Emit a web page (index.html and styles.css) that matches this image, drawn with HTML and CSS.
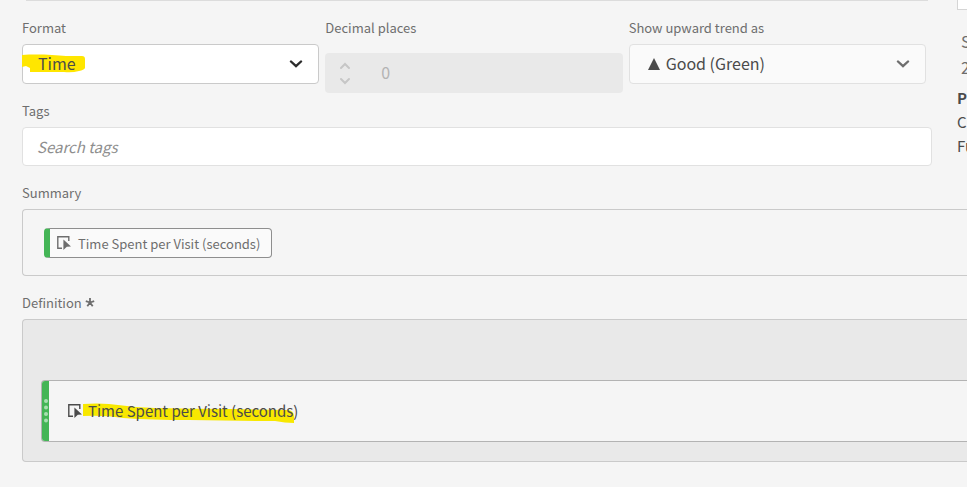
FILE: index.html
```html
<!DOCTYPE html>
<html lang="en">
  <head>
    <meta charset="UTF-8" />
    <meta name="viewport" content="width=device-width, initial-scale=1" />
    <title>Metric Builder</title>
    <link rel="stylesheet" href="styles.css" />
  </head>
  <body>
    <main class="builder">
      <div class="top">
        <form class="settings">
          <div class="previous-field"></div>
          <div class="field-row">
            <div class="field">
              <label for="format">Format</label>
              <div class="picker picker-active">
                <svg class="marker" width="64" height="19" viewBox="0 0 64 19">
                  <path d="M0 1 C16 0 32 1 44 2 L60 2 Q63 2 63 5 L63 14 Q62 16 57 17 Q50 19 42 18 L8 18 L8 14 L4 12 L0 13 Z" fill="#ffe600" />
                </svg>
                <select id="format">
                  <option>Time</option>
                </select>
                <svg class="chevron" width="14" height="8" viewBox="0 0 14 8">
                  <path d="M2 1.5 L7 6.2 L12 1.5" />
                </svg>
              </div>
            </div>
            <div class="field">
              <label for="decimals">Decimal places</label>
              <div class="stepper">
                <div class="stepper-buttons">
                  <button type="button" aria-label="Increase" disabled>
                    <svg width="12" height="8" viewBox="0 0 12 8"><path d="M2 6 L6 2 L10 6" /></svg>
                  </button>
                  <button type="button" aria-label="Decrease" disabled>
                    <svg width="12" height="8" viewBox="0 0 12 8"><path d="M2 2 L6 6 L10 2" /></svg>
                  </button>
                </div>
                <input id="decimals" type="number" value="0" disabled />
              </div>
            </div>
            <div class="field">
              <label for="trend">Show upward trend as</label>
              <div class="picker picker-trend">
                <svg class="triangle" width="12" height="12" viewBox="0 0 12 12">
                  <path d="M6 0 L12 12 L0 12 Z" />
                </svg>
                <select id="trend">
                  <option>Good (Green)</option>
                </select>
                <svg class="chevron" width="14" height="8" viewBox="0 0 14 8">
                  <path d="M2 1.5 L7 6.2 L12 1.5" />
                </svg>
              </div>
            </div>
          </div>
          <div class="field">
            <label for="tags">Tags</label>
            <input id="tags" class="search" type="text" placeholder="Search tags" />
          </div>
        </form>

        <aside class="side">
          <div class="side-box"></div>
          <p class="side-note">S</p>
          <p class="side-note">2</p>
          <h2>P</h2>
          <p>Cu</p>
          <p>Fu</p>
        </aside>
      </div>

      <section class="section">
        <h3>Summary</h3>
        <div class="summary">
          <div class="chip">
            <svg class="metric-icon" width="14" height="14" viewBox="0 0 14 14">
              <path d="M5 12.2 H0.8 V0.8 H11.8 V5" fill="none" stroke="currentColor" stroke-width="1.4" />
              <path d="M6.4 3.4 L14 10.6 L9.8 10.7 L6.4 14 Z" fill="currentColor" />
            </svg>
            <span>Time Spent per Visit (seconds)</span>
          </div>
        </div>
      </section>

      <section class="section">
        <h3>
          Definition
          <svg class="required" width="10" height="11" viewBox="0 0 10 11">
            <path d="M5 5.5 V1 M5 5.5 L9.2 4.1 M5 5.5 L7.7 9.3 M5 5.5 L2.3 9.3 M5 5.5 L0.8 4.1" />
          </svg>
        </h3>
        <div class="definition">
          <div class="metric">
            <div class="handle">
              <svg width="4" height="24" viewBox="0 0 4 24">
                <circle cx="2" cy="2" r="2" />
                <circle cx="2" cy="8.5" r="2" />
                <circle cx="2" cy="15" r="2" />
                <circle cx="2" cy="21.5" r="2" />
              </svg>
            </div>
            <svg class="metric-icon" width="14" height="14" viewBox="0 0 14 14">
              <path d="M5 12.2 H0.8 V0.8 H11.8 V5" fill="none" stroke="currentColor" stroke-width="1.4" />
              <path d="M6.4 3.4 L14 10.6 L9.8 10.7 L6.4 14 Z" fill="currentColor" />
            </svg>
            <div class="metric-name">
              <svg class="marker" width="212" height="20" viewBox="0 0 212 20">
                <path d="M0 1 Q14 0 26 1 Q48 4 72 5 Q110 6 150 6 L204 7 Q211 7 211 14 L211 20 Q202 20 192 18 Q150 18 106 17 Q68 17 40 15 Q22 12 0 13 Z" fill="#f8e800" />
              </svg>
              <span>Time Spent per Visit (seconds)</span>
            </div>
          </div>
        </div>
      </section>
    </main>
  </body>
</html>
```

FILE: styles.css
```css
* {
  box-sizing: border-box;
}
body {
  margin: 0;
  background: #f5f5f5;
  color: #4b4b4b;
  font-family: "Noto Sans CJK SC", "Open Sans", sans-serif;
  font-size: 15px;
  overflow-x: hidden;
}
svg {
  display: block;
  flex: none;
}
.builder {
  padding: 0 0 24px 22px;
}
.top {
  display: flex;
  gap: 25px;
}
.settings {
  flex: 1;
  min-width: 0;
}
.previous-field {
  height: 1px;
  margin: 0 4px 17px;
  background: #dcdcdc;
}
.field-row {
  display: grid;
  grid-template-columns: repeat(3, 1fr);
  gap: 6px;
  margin: 0 6px 8px 0;
}
label,
h3 {
  display: block;
  margin: 0 0 6px;
  color: #6e6e6e;
  font-size: 13px;
  font-weight: normal;
  line-height: 20px;
}
select,
input {
  font: inherit;
  color: inherit;
}

/* Pickers */
.picker {
  position: relative;
  height: 40px;
  border: 1px solid #e1e1e1;
  border-radius: 4px;
  background: #fafafa;
}
.picker select {
  position: relative;
  width: 100%;
  height: 100%;
  padding: 0 40px 2px 15px;
  border: 0;
  background: transparent;
  font-size: 16px;
  appearance: none;
}
.picker .chevron {
  position: absolute;
  top: 15px;
  right: 15px;
  fill: none;
  stroke: #6e6e6e;
  stroke-width: 2.4;
  stroke-linecap: round;
  pointer-events: none;
}
.picker-active {
  border-color: #cacaca;
  background: #fff;
}
.picker-active .chevron {
  stroke: #2c2c2c;
}
.picker-active .marker {
  position: absolute;
  top: 9px;
  left: -1px;
}
.picker-trend select {
  padding-left: 36px;
}
.triangle {
  position: absolute;
  top: 13px;
  left: 18px;
  fill: #4b4b4b;
}

/* Decimal places */
.stepper {
  display: flex;
  align-items: center;
  height: 40px;
  margin-top: 15px;
  border-radius: 4px;
  background: #e9e9e9;
}
.stepper-buttons {
  display: grid;
  gap: 7px;
  width: 40px;
  justify-content: center;
}
.stepper-buttons button {
  padding: 0;
  border: 0;
  background: none;
}
.stepper-buttons path {
  fill: none;
  stroke: #c6c6c6;
  stroke-width: 2;
  stroke-linecap: round;
}
.stepper input {
  flex: 1;
  min-width: 0;
  padding: 0 16px 2px;
  border: 0;
  background: transparent;
  color: #b3b3b3;
  font-size: 16px;
  appearance: textfield;
}

.search {
  display: block;
  width: 100%;
  height: 39px;
  padding: 0 14px;
  border: 1px solid #e1e1e1;
  border-radius: 4px;
  background: #fff;
}
.search::placeholder {
  color: #8e8e8e;
  font-style: italic;
}

/* Right panel */
.side {
  width: 10px;
  overflow: hidden;
  white-space: nowrap;
}
.side-box {
  height: 10px;
  margin-bottom: 18px;
  border: solid #d5d5d5;
  border-width: 0 0 1px 1px;
  background: #fff;
}
.side p,
.side h2 {
  margin: 0;
  font-size: 15px;
  line-height: 24px;
}
.side .side-note {
  padding-left: 4px;
  color: #6e6e6e;
  font-size: 16px;
  line-height: 26px;
}
.side h2 {
  margin-top: 6px;
}

/* Summary and definition */
.section {
  margin-top: 17px;
}
.summary,
.definition {
  border: 1px solid #cacaca;
  border-right: 0;
  border-radius: 4px 0 0 4px;
}
.summary {
  padding: 18px 21px 17px;
}
.chip {
  display: inline-flex;
  align-items: center;
  gap: 7px;
  height: 30px;
  padding: 0 11px 0 7px;
  border: 1px solid #8e8e8e;
  border-left: 6px solid #44b556;
  border-radius: 4px;
  background: #fafafa;
  color: #6e6e6e;
  font-size: 13px;
  vertical-align: top;
}
.required {
  display: inline-block;
  fill: none;
  stroke: #6e6e6e;
  stroke-width: 1.8;
}
.definition {
  padding: 60px 0 19px 18px;
  background: #e9e9e9;
}
.metric {
  display: flex;
  align-items: center;
  height: 62px;
  border: 1px solid #b3b3b3;
  border-right: 0;
  border-radius: 4px 0 0 4px;
  background: #f5f5f5;
}
.handle {
  display: flex;
  align-items: center;
  justify-content: center;
  align-self: stretch;
  width: 7px;
  margin-right: 19px;
  border-radius: 3px 0 0 3px;
  background: #44b556;
}
.handle circle {
  fill: #a9dfb1;
}
.metric-name {
  position: relative;
  margin-left: 6px;
  line-height: 24px;
}
.metric-name .marker {
  position: absolute;
  top: 4px;
  left: -5px;
}
.metric-name span {
  position: relative;
}
```
